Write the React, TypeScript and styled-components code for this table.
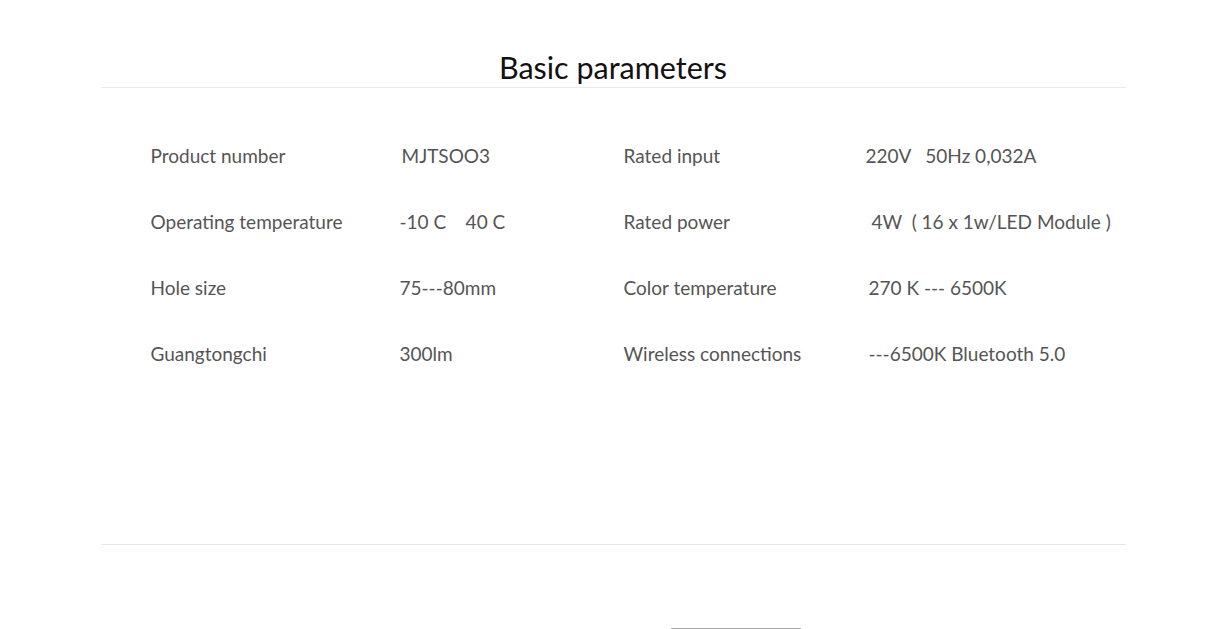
import { Fragment } from "react";
import styled, { createGlobalStyle } from "styled-components";

const GlobalStyle = createGlobalStyle`
    html, body {
        margin: 0;
        padding: 0;
        background: #fff;
        font-family: Lato, "Open Sans", sans-serif;
    }
`;

const Page = styled.div`
    width: 1025px;
    margin: 0 auto;
    padding-top: 47px;
`;

const Title = styled.h2`
    margin: 0;
    text-align: center;
    font-size: 30.5px;
    font-weight: 400;
    line-height: 40px;
    color: #111;
    border-bottom: 1px solid #ebebeb;
`;

const Section = styled.div`
    height: 457px;
    border-bottom: 1px solid #e6e6e6;
    padding: 35px 0 0 50px;
    box-sizing: border-box;
`;

const Grid = styled.div`
    display: grid;
    grid-template-columns: 249px 224px 242px auto;
    grid-auto-rows: 66px;
`;

const Label = styled.div`
    font-size: 19px;
    line-height: 66px;
    color: #555;
`;

const Value = styled.div<{ $shift?: number }>`
    font-size: 19px;
    line-height: 66px;
    color: #555;
    padding-left: ${(p) => p.$shift ?? 0}px;
    white-space: pre;
`;

const Footer = styled.div`
    display: flex;
    padding: 83px 0 0 570px;
`;

const MoreBox = styled.div`
    width: 128px;
    height: 40px;
    border: 1px solid #aaa;
`;

const rows = [
    { label: "Product number", value: "MJTSOO3", vShift: 2, label2: "Rated input", value2: "220V   50Hz 0,032A", v2Shift: 0 },
    { label: "Operating temperature", value: "-10 C    40 C", vShift: 0, label2: "Rated power", value2: "4W  ( 16 x 1w/LED Module )", v2Shift: 6 },
    { label: "Hole size", value: "75---80mm", vShift: -1, label2: "Color temperature", value2: "270 K --- 6500K", v2Shift: 3 },
    { label: "Guangtongchi", value: "300lm", vShift: 0, label2: "Wireless connections", value2: "---6500K Bluetooth 5.0", v2Shift: 3 },
];

const App = () => {
    return (
        <>
            <GlobalStyle />
            <Page>
                <Title>Basic parameters</Title>
                <Section>
                    <Grid>
                        {rows.map((r) => (
                            <Fragment key={r.label}>
                                <Label>{r.label}</Label>
                                <Value $shift={r.vShift}>{r.value}</Value>
                                <Label>{r.label2}</Label>
                                <Value $shift={r.v2Shift}>{r.value2}</Value>
                            </Fragment>
                        ))}
                    </Grid>
                </Section>
                <Footer>
                    <MoreBox />
                </Footer>
            </Page>
        </>
    );
};

export default App;
